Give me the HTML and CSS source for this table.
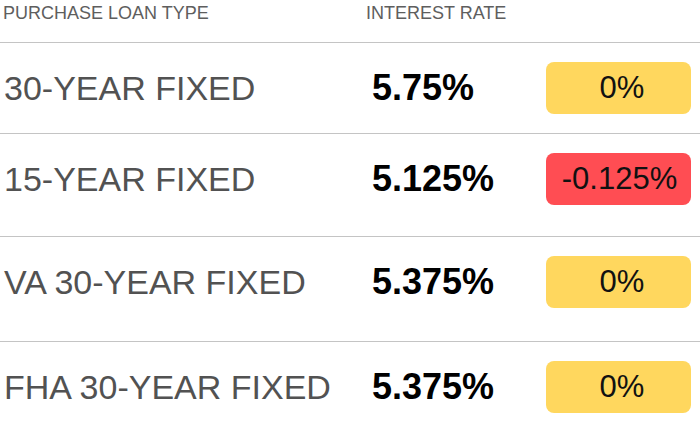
FILE: index.html
```html
<!DOCTYPE html>
<html lang="en">
<head>
<meta charset="utf-8">
<title>Purchase loan rates</title>
<link rel="stylesheet" href="styles.css">
</head>
<body>
  <div class="rates">
    <div class="rates__head">
      <div class="rates__col-type">PURCHASE LOAN TYPE</div>
      <div class="rates__col-rate">INTEREST RATE</div>
    </div>
    <div class="rates__row">
      <div class="rates__type">30-YEAR FIXED</div>
      <div class="rates__rate">5.75%</div>
      <div class="rates__change rates__change--flat">0%</div>
    </div>
    <div class="rates__row">
      <div class="rates__type">15-YEAR FIXED</div>
      <div class="rates__rate">5.125%</div>
      <div class="rates__change rates__change--down">-0.125%</div>
    </div>
    <div class="rates__row">
      <div class="rates__type">VA 30-YEAR FIXED</div>
      <div class="rates__rate">5.375%</div>
      <div class="rates__change rates__change--flat">0%</div>
    </div>
    <div class="rates__row">
      <div class="rates__type">FHA 30-YEAR FIXED</div>
      <div class="rates__rate">5.375%</div>
      <div class="rates__change rates__change--flat">0%</div>
    </div>
  </div>
</body>
</html>
```

FILE: styles.css
```css
* { box-sizing: border-box; }

html, body {
  margin: 0;
  padding: 0;
  background: #ffffff;
  overflow: hidden;
}

body {
  font-family: "Liberation Sans", Arial, sans-serif;
  width: 700px;
  height: 424px;
}

.rates {
  display: grid;
  grid-template-rows: 42px 91px 103px 105px 1fr;
  height: 424px;
}

.rates__head,
.rates__row {
  display: grid;
  grid-template-columns: 366px 176px 1fr;
  padding-left: 4px;
}

.rates__head {
  grid-template-columns: 363px 1fr;
  padding-left: 3px;
  padding-top: 4px;
  font-size: 18px;
  line-height: 18px;
  color: #5e5e5e;
  align-items: start;
}

.rates__row {
  border-top: 1px solid #c4c4c4;
  padding-top: 19px;
  grid-template-rows: 52px;
  align-items: center;
  align-content: start;
}

.rates__type {
  font-size: 34px;
  line-height: 36px;
  color: #525252;
  white-space: nowrap;
}

.rates__rate {
  font-size: 36px;
  line-height: 36px;
  font-weight: 700;
  color: #000000;
  padding-left: 2px;
  white-space: nowrap;
}

.rates__change {
  width: 145px;
  height: 52px;
  border-radius: 8px;
  display: flex;
  align-items: center;
  justify-content: center;
  font-size: 31px;
  color: #111111;
  padding-left: 7px;
}

.rates__change--flat { background: #ffd75e; }
.rates__change--down { background: #ff4d53; padding-left: 2px; }
```
